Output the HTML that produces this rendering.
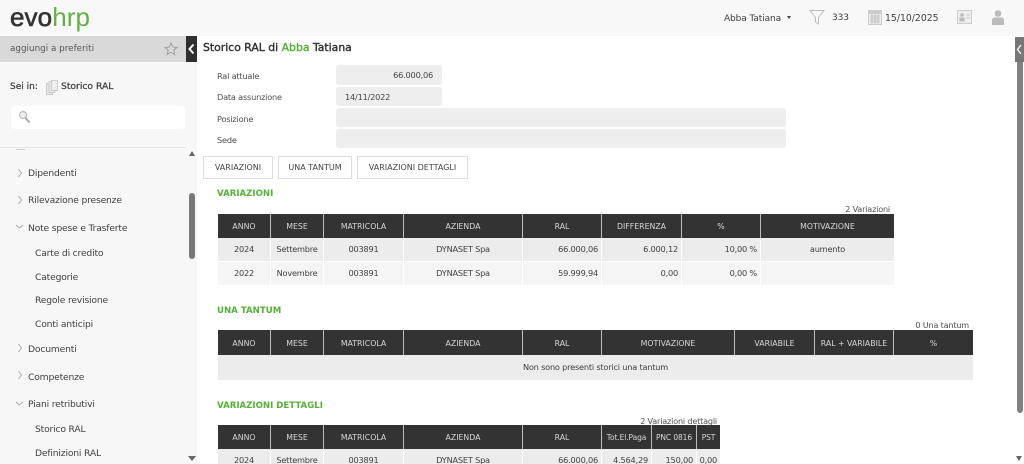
<!DOCTYPE html>
<html lang="it"><head><meta charset="utf-8"><title>Storico RAL</title>
<style>
html,body{margin:0;padding:0;width:1024px;height:464px;overflow:hidden;background:#fff}
body{font-family:"DejaVu Sans","Liberation Sans",sans-serif;font-size:9px;color:#444;position:relative;filter:blur(.3px)}
div,span,svg{position:absolute;box-sizing:border-box}
.t{white-space:nowrap;line-height:12px;margin-top:2px}
.m,.s{font-size:9.2px;letter-spacing:-.18px;color:#3f3f3f;margin-top:3px}
.l{font-size:8.2px;letter-spacing:-.2px;color:#4f4f4f}
.box{background:#eee;border-radius:3px;letter-spacing:-.2px}
.btn{top:156px;height:23px;background:#fff;border:1px solid #ddd;text-align:center;line-height:22px;font-size:8px;color:#444;white-space:nowrap}
.h{color:#55b035;font-weight:bold;font-size:8.6px;left:217px;white-space:nowrap;line-height:12px;margin-top:2.5px}
.hd{background:#333;color:#d8d8d8;font-size:7.8px;text-align:center;white-space:nowrap;border-right:1px solid #bbb;padding-top:2px}
.c{font-size:8.2px;letter-spacing:-.2px;color:#3f3f3f;white-space:nowrap;border-right:1px solid #fff;padding-top:1px}
.ce{text-align:center}.r{text-align:right;padding-right:3px}
.cnt{font-size:8.1px;letter-spacing:-.18px;color:#4f4f4f;white-space:nowrap;line-height:10px;text-align:right;margin-top:1px}
</style></head><body>
<!-- top bar -->
<div style="left:0;top:0;width:1024px;height:36px;background:#f8f8f8"></div>
<div style="left:10px;top:-1px;font-family:'Liberation Sans',sans-serif;font-size:26px;line-height:36px;letter-spacing:.1px;color:#333;white-space:nowrap;-webkit-text-stroke:.6px #333">evo<span style="position:static;color:#62b043;-webkit-text-stroke:0">hrp</span></div>
<div class="t" style="left:724px;top:11px;font-size:9px;letter-spacing:-.1px;color:#3f3f3f">Abba Tatiana</div>
<div style="left:787px;top:16px;border:2.5px solid transparent;border-top:3px solid #444;width:0;height:0"></div>
<svg style="left:809px;top:9px" width="16" height="16" viewBox="0 0 16 16"><path d="M1 1.500H15L9.500 8.500V15L6.500 13V8.500Z" fill="none" stroke="#bbb" stroke-width="1"/></svg>
<div class="t" style="left:832px;top:9.500px;font-size:9px;letter-spacing:-.1px;color:#3f3f3f">333</div>
<svg style="left:868px;top:9px" width="14" height="16" viewBox="0 0 14 16"><rect x="0" y="1" width="14" height="15" fill="#ccc"/><rect x="1" y="5" width="12" height="10" fill="#eee"/><path d="M2 7H12M2 9H12M2 11H12M2 13H12M4 5V15M7 5V15M10 5V15" stroke="#aaa" stroke-width=".6"/></svg>
<div class="t" style="left:885px;top:11px;font-size:9.3px;color:#3f3f3f">15/10/2025</div>
<svg style="left:957px;top:10px" width="15" height="14" viewBox="0 0 15 14"><rect x=".5" y=".5" width="14" height="13" fill="#eee" stroke="#ccc"/><circle cx="5" cy="5" r="1.8" fill="#bbb"/><rect x="2.500" y="7.500" width="5" height="4" fill="#bbb"/><path d="M9 5H13M9 8H13" stroke="#ccc"/></svg>
<svg style="left:992px;top:10px" width="12" height="15" viewBox="0 0 12 15"><circle cx="6" cy="3.500" r="3.300" fill="#bbb"/><path d="M0 15V10Q0 7.500 3 7.500H9Q12 7.500 12 10V15Z" fill="#bbb"/></svg>
<!-- sidebar -->
<div style="left:0;top:36px;width:197px;height:428px;background:#f7f7f7"></div>
<div style="left:0;top:36px;width:186px;height:26px;background:#d9d9d9"></div>
<div class="t" style="left:10px;top:41px;font-size:8.8px;color:#555">aggiungi a preferiti</div>
<svg style="left:164px;top:42px" width="14" height="14" viewBox="0 0 14 14"><path d="M7 1L8.800 5.100 13 5.500 9.800 8.300 10.800 12.600 7 10.300 3.200 12.600 4.200 8.300 1 5.500 5.200 5.100Z" fill="none" stroke="#999" stroke-width=".9"/></svg>
<div style="left:186px;top:36px;width:11px;height:26px;background:#2f2f2f"></div>
<svg style="left:186px;top:36px" width="11" height="26" viewBox="0 0 11 26"><path d="M7.500 8.500L3.500 13L7.500 17.500" fill="none" stroke="#fff" stroke-width="2"/></svg>
<div class="t" style="left:10px;top:79px;font-size:9px;color:#444;-webkit-text-stroke:.25px #444">Sei in:</div>
<svg style="left:46px;top:80px" width="12" height="15" viewBox="0 0 12 15"><rect x="0.500" y="3.500" width="6" height="11" fill="#e4e4e4" stroke="#ccc"/><rect x="3" y="1.500" width="6" height="11" fill="#e8e8e8" stroke="#ccc"/><rect x="5.500" y=".5" width="6" height="10" fill="#eee" stroke="#ccc"/></svg>
<div class="t" style="left:61px;top:79px;font-size:9.200px;color:#444;-webkit-text-stroke:.3px #444">Storico RAL</div>
<div style="left:11px;top:106px;width:174px;height:23px;background:#fff;border-radius:4px"></div>
<svg style="left:18px;top:110px" width="13" height="14" viewBox="0 0 13 14"><circle cx="5" cy="5" r="3.500" fill="#eee" stroke="#bbb" stroke-width="1.200"/><path d="M7.500 8L11.500 12.500" stroke="#aaa" stroke-width="2"/></svg>
<div style="left:0;top:147px;width:186px;height:1px;background:#e6e6e6"></div>
<div style="left:16px;top:149px;width:9px;height:1px;background:#ccc"></div>

<div class="t m" style="left:28px;top:165px">Dipendenti</div>
<div class="t m" style="left:28px;top:192px">Rilevazione presenze</div>
<div class="t m" style="left:28px;top:220px">Note spese e Trasferte</div>
<div class="t s" style="left:35px;top:245px">Carte di credito</div>
<div class="t s" style="left:35px;top:269px">Categorie</div>
<div class="t s" style="left:35px;top:292px">Regole revisione</div>
<div class="t s" style="left:35px;top:316px">Conti anticipi</div>
<div class="t m" style="left:28px;top:341px">Documenti</div>
<div class="t m" style="left:28px;top:369px">Competenze</div>
<div class="t m" style="left:28px;top:396px">Piani retributivi</div>
<div class="t s" style="left:35px;top:421px">Storico RAL</div>
<div class="t s" style="left:35px;top:445px">Definizioni RAL</div>
<svg style="left:15px;top:165px" width="10" height="280" viewBox="0 0 10 280" fill="none" stroke="#aaa" stroke-width="1"><path d="M3.500 4L6.500 8L3.500 12"/><path d="M3.500 31L6.500 35L3.500 39"/><path d="M1 60L4.500 63L8 60"/><path d="M3.500 179L6.500 183L3.500 187"/><path d="M3.500 206L6.500 210L3.500 214"/><path d="M1 237L4.500 240L8 237"/></svg>
<!-- sidebar scrollbar -->
<div style="left:189px;top:151px;width:0;height:0;border:3.500px solid transparent;border-bottom:5px solid #666;border-top:0"></div>
<div style="left:189px;top:193px;width:6px;height:66px;background:#777;border-radius:3px"></div>
<div style="left:188px;top:456px;width:0;height:0;border:4px solid transparent;border-top:5px solid #666;border-bottom:0"></div>

<!-- content -->
<div class="t" style="left:203px;top:39px;font-size:10.85px;line-height:13px;color:#333;-webkit-text-stroke:.4px #333">Storico RAL di <span style="position:static;color:#55b035;-webkit-text-stroke:.4px #55b035">Abba</span> Tatiana</div>
<div class="t l" style="left:217px;top:68px">Ral attuale</div>
<div class="t l" style="left:217px;top:89px">Data assunzione</div>
<div class="t l" style="left:217px;top:110.500px">Posizione</div>
<div class="t l" style="left:217px;top:131.500px">Sede</div>
<div class="box" style="left:336px;top:65px;width:106px;height:20px;text-align:right;padding-right:9px;line-height:21px;font-size:8.2px">66.000,06</div>
<div class="box" style="left:336px;top:87px;width:106px;height:19px;padding-left:9px;line-height:20px;font-size:8.2px">14/11/2022</div>
<div class="box" style="left:336px;top:108px;width:450px;height:19px"></div>
<div class="box" style="left:336px;top:129px;width:450px;height:19px"></div>
<div class="btn" style="left:203px;width:70px">VARIAZIONI</div>
<div class="btn" style="left:278px;width:74px">UNA TANTUM</div>
<div class="btn" style="left:357px;width:111px">VARIAZIONI DETTAGLI</div>

<!-- Variazioni -->
<div class="h" style="top:185.500px">VARIAZIONI</div>
<div class="cnt" style="left:740px;width:150px;top:203px">2 Variazioni</div>
<div class="hd" style="left:218px;top:214px;width:53px;height:24px;line-height:22px">ANNO</div>
<div class="hd" style="left:271px;top:214px;width:53px;height:24px;line-height:22px">MESE</div>
<div class="hd" style="left:324px;top:214px;width:80px;height:24px;line-height:22px">MATRICOLA</div>
<div class="hd" style="left:404px;top:214px;width:119px;height:24px;line-height:22px">AZIENDA</div>
<div class="hd" style="left:523px;top:214px;width:79px;height:24px;line-height:22px">RAL</div>
<div class="hd" style="left:602px;top:214px;width:80px;height:24px;line-height:22px">DIFFERENZA</div>
<div class="hd" style="left:682px;top:214px;width:79px;height:24px;line-height:22px">%</div>
<div class="hd" style="left:761px;top:214px;width:133px;height:24px;line-height:22px;border-right:0">MOTIVAZIONE</div>

<div style="left:218px;top:238px;width:676px;height:23px;background:#ececec"></div>
<div style="left:218px;top:262px;width:676px;height:23px;background:#f5f5f5"></div>
<div class="c ce" style="left:218px;top:238px;width:53px;height:23px;line-height:21px">2024</div>
<div class="c ce" style="left:271px;top:238px;width:53px;height:23px;line-height:21px">Settembre</div>
<div class="c ce" style="left:324px;top:238px;width:80px;height:23px;line-height:21px">003891</div>
<div class="c ce" style="left:404px;top:238px;width:119px;height:23px;line-height:21px">DYNASET Spa</div>
<div class="c r" style="left:523px;top:238px;width:79px;height:23px;line-height:21px">66.000,06</div>
<div class="c r" style="left:602px;top:238px;width:80px;height:23px;line-height:21px">6.000,12</div>
<div class="c r" style="left:682px;top:238px;width:79px;height:23px;line-height:21px">10,00 %</div>
<div class="c ce" style="left:761px;top:238px;width:133px;height:23px;line-height:21px;border-right:0">aumento</div>
<div class="c ce" style="left:218px;top:262px;width:53px;height:23px;line-height:21px">2022</div>
<div class="c ce" style="left:271px;top:262px;width:53px;height:23px;line-height:21px">Novembre</div>
<div class="c ce" style="left:324px;top:262px;width:80px;height:23px;line-height:21px">003891</div>
<div class="c ce" style="left:404px;top:262px;width:119px;height:23px;line-height:21px">DYNASET Spa</div>
<div class="c r" style="left:523px;top:262px;width:79px;height:23px;line-height:21px">59.999,94</div>
<div class="c r" style="left:602px;top:262px;width:80px;height:23px;line-height:21px">0,00</div>
<div class="c r" style="left:682px;top:262px;width:79px;height:23px;line-height:21px">0,00 %</div>

<!-- Una tantum -->
<div class="h" style="top:302px">UNA TANTUM</div>
<div class="cnt" style="left:820px;width:149px;top:319px">0 Una tantum</div>
<div class="hd" style="left:218px;top:330px;width:53px;height:25px;line-height:23px">ANNO</div>
<div class="hd" style="left:271px;top:330px;width:53px;height:25px;line-height:23px">MESE</div>
<div class="hd" style="left:324px;top:330px;width:80px;height:25px;line-height:23px">MATRICOLA</div>
<div class="hd" style="left:404px;top:330px;width:119px;height:25px;line-height:23px">AZIENDA</div>
<div class="hd" style="left:523px;top:330px;width:79px;height:25px;line-height:23px">RAL</div>
<div class="hd" style="left:602px;top:330px;width:133px;height:25px;line-height:23px">MOTIVAZIONE</div>
<div class="hd" style="left:735px;top:330px;width:80px;height:25px;line-height:23px">VARIABILE</div>
<div class="hd" style="left:815px;top:330px;width:79px;height:25px;line-height:23px">RAL + VARIABILE</div>
<div class="hd" style="left:894px;top:330px;width:79px;height:25px;line-height:23px;border-right:0">%</div>
<div class="c ce" style="left:218px;top:355px;width:755px;height:25px;line-height:23px;background:#ececec;border:0">Non sono presenti storici una tantum</div>

<!-- Variazioni dettagli -->
<div class="h" style="top:397px">VARIAZIONI DETTAGLI</div>
<div class="cnt" style="left:567px;width:150px;top:415px">2 Variazioni dettagli</div>
<div class="hd" style="left:218px;top:425px;width:53px;height:24px;line-height:22px">ANNO</div>
<div class="hd" style="left:271px;top:425px;width:53px;height:24px;line-height:22px">MESE</div>
<div class="hd" style="left:324px;top:425px;width:80px;height:24px;line-height:22px">MATRICOLA</div>
<div class="hd" style="left:404px;top:425px;width:119px;height:24px;line-height:22px">AZIENDA</div>
<div class="hd" style="left:523px;top:425px;width:79px;height:24px;line-height:22px">RAL</div>
<div class="hd" style="left:602px;top:425px;width:50px;height:24px;line-height:22px;font-size:7.5px;letter-spacing:-.1px">Tot.El.Paga</div>
<div class="hd" style="left:652px;top:425px;width:45px;height:24px;line-height:22px;font-size:7.5px;letter-spacing:-.1px">PNC 0816</div>
<div class="hd" style="left:697px;top:425px;width:23px;height:24px;line-height:22px;border-right:0;font-size:7.5px;letter-spacing:-.1px">PST</div>
<div style="left:218px;top:449px;width:502px;height:15px;background:#ececec"></div>
<div class="c ce" style="left:218px;top:449px;width:53px;height:23px;line-height:21px">2024</div>
<div class="c ce" style="left:271px;top:449px;width:53px;height:23px;line-height:21px">Settembre</div>
<div class="c ce" style="left:324px;top:449px;width:80px;height:23px;line-height:21px">003891</div>
<div class="c ce" style="left:404px;top:449px;width:119px;height:23px;line-height:21px">DYNASET Spa</div>
<div class="c r" style="left:523px;top:449px;width:79px;height:23px;line-height:21px">66.000,06</div>
<div class="c r" style="left:602px;top:449px;width:50px;height:23px;line-height:21px">4.564,29</div>
<div class="c r" style="left:652px;top:449px;width:45px;height:23px;line-height:21px">150,00</div>
<div class="c r" style="left:697px;top:449px;width:23px;height:23px;line-height:21px;border-right:0">0,00</div>

<!-- main scrollbar -->
<div style="left:1017px;top:62px;width:6px;height:351px;background:#808080;border-radius:0 0 3px 3px"></div>
<div style="left:1015px;top:37px;width:9px;height:25px;background:#777"></div>
<svg style="left:1015px;top:37px" width="9" height="25" viewBox="0 0 9 25"><path d="M6 8L2.500 12.500L6 17" fill="none" stroke="#fff" stroke-width="1.300"/></svg>
<div style="left:1016px;top:456px;width:0;height:0;border:3.500px solid transparent;border-top:5px solid #666;border-bottom:0"></div>
</body></html>
